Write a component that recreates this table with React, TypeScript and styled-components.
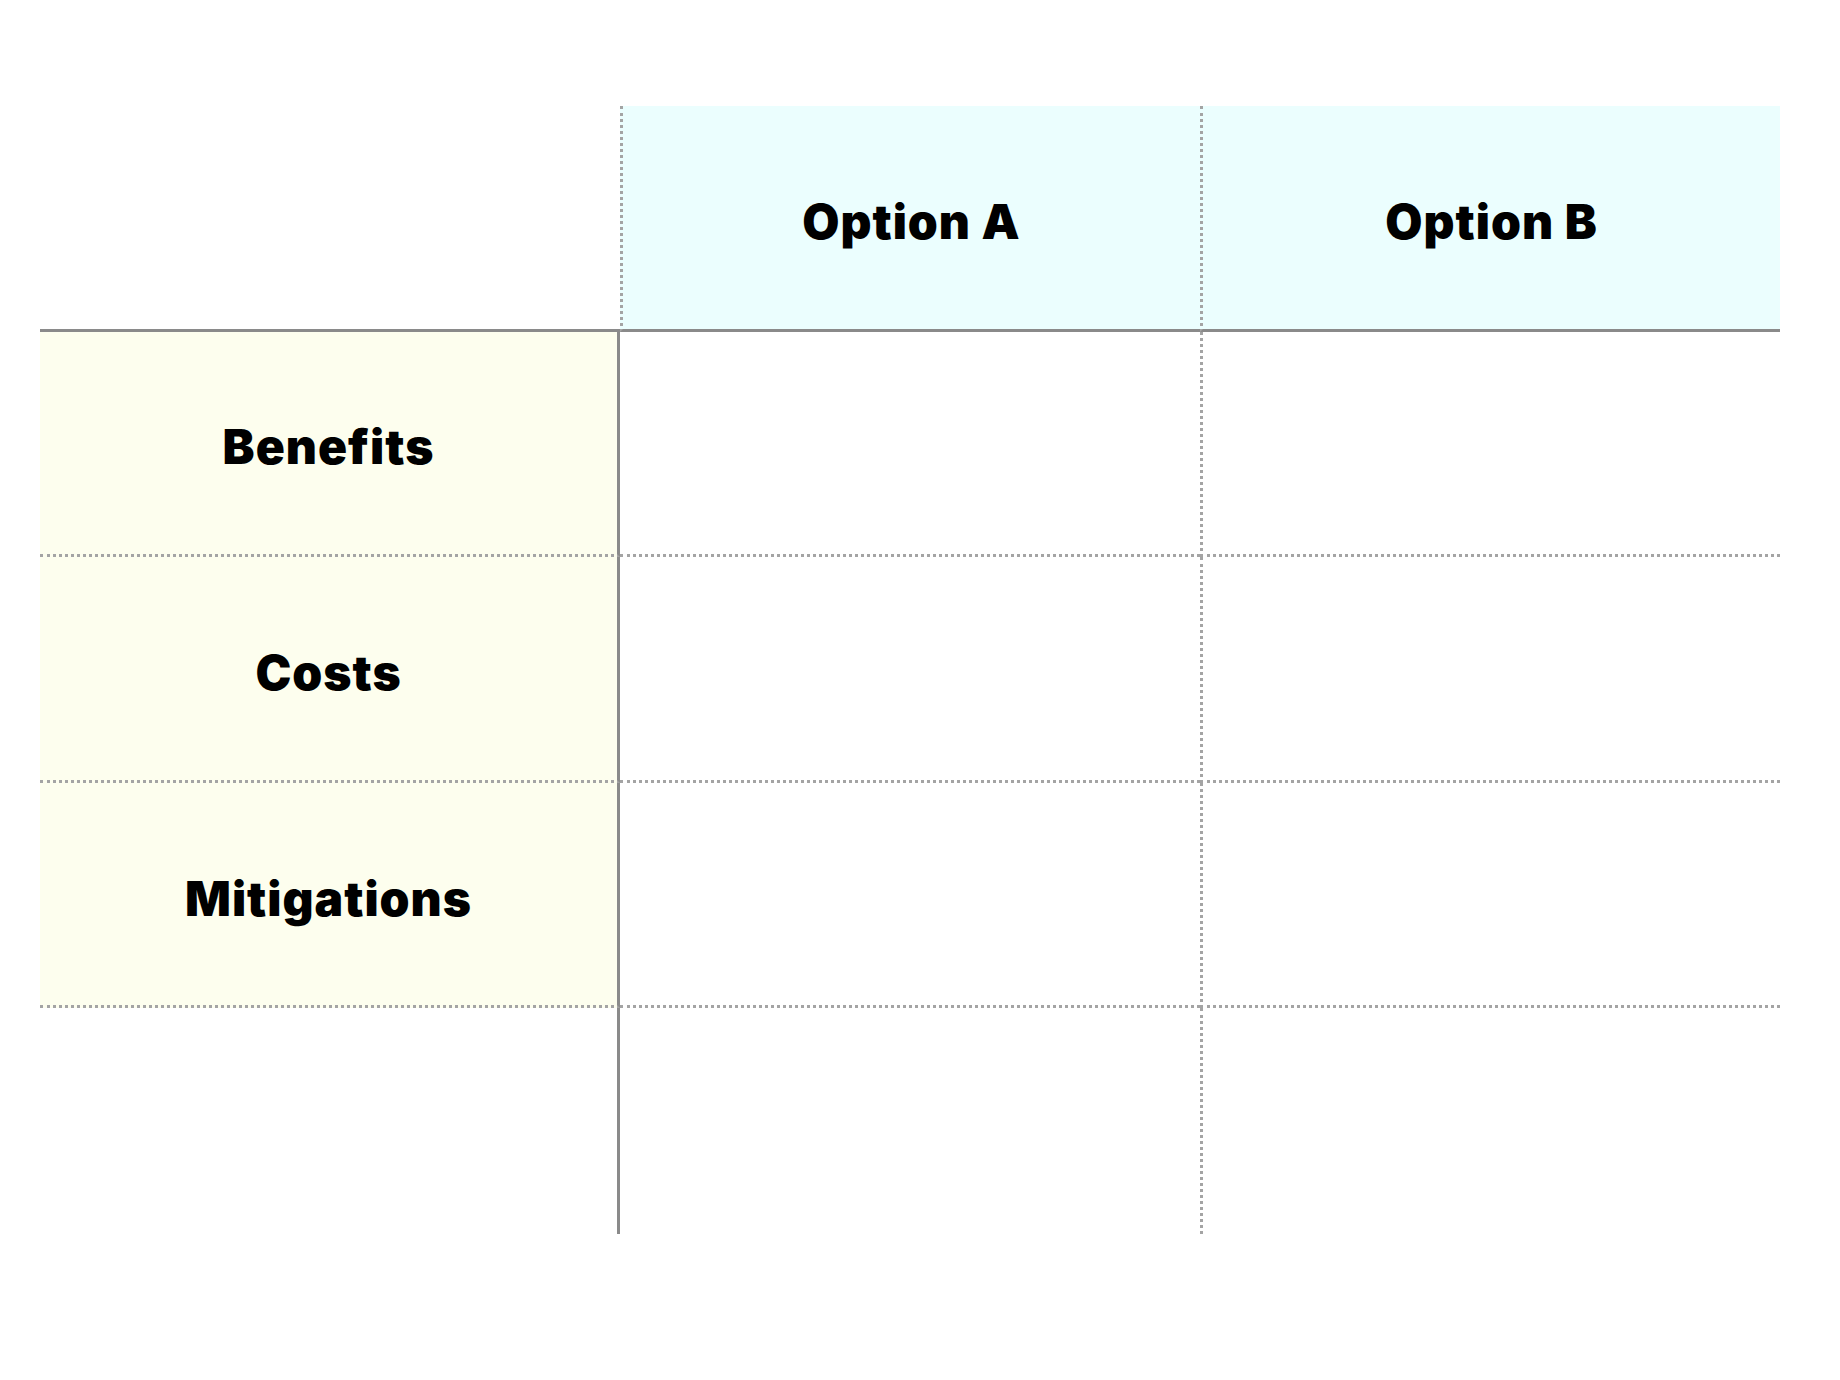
import React from "react";
import styled, { createGlobalStyle } from "styled-components";

const GlobalStyle = createGlobalStyle`
  html, body {
    margin: 0;
    padding: 0;
    background: #ffffff;
  }
  body {
    font-family: "Inter", "Lato", "Liberation Sans", sans-serif;
  }
`;

const Page = styled.div`
  padding: 106px 0 0 40px;
`;

const Grid = styled.div`
  display: grid;
  grid-template-columns: repeat(3, 580px);
  grid-auto-rows: 225.6px;
`;

type CellProps = {
  $bg?: string;
  $left?: "dotted" | "none";
  $right?: "solid" | "none";
  $bottom?: "solid" | "dotted" | "none";
};

const Cell = styled.div<CellProps>`
  box-sizing: border-box;
  display: flex;
  align-items: center;
  justify-content: center;
  padding-top: 8px;
  background: ${(p) => p.$bg ?? "transparent"};
  border-left: ${(p) => (p.$left === "dotted" ? "3px dotted #a4a4a4" : "none")};
  border-right: ${(p) => (p.$right === "solid" ? "3px solid #8a8a8a" : "none")};
  border-bottom: ${(p) =>
    p.$bottom === "solid"
      ? "3px solid #8a8a8a"
      : p.$bottom === "dotted"
      ? "3px dotted #a4a4a4"
      : "none"};
  font-size: 48px;
  font-weight: 900;
  color: #000;
  letter-spacing: 1px;
`;

const CYAN = "#ebfefe";
const IVORY = "#fdfeee";

const rows = ["Benefits", "Costs", "Mitigations", ""];

export default function App() {
  return (
    <>
      <GlobalStyle />
      <Page>
        <Grid>
          <Cell $bottom="solid" />
          <Cell $bg={CYAN} $left="dotted" $bottom="solid">
            Option A
          </Cell>
          <Cell $bg={CYAN} $left="dotted" $bottom="solid">
            Option B
          </Cell>
          {rows.map((label, i) => {
            const last = i === rows.length - 1;
            const bottom = last ? "none" : "dotted";
            return (
              <React.Fragment key={i}>
                <Cell $bg={label ? IVORY : "transparent"} $right="solid" $bottom={bottom}>
                  {label}
                </Cell>
                <Cell $bottom={bottom} />
                <Cell $left="dotted" $bottom={bottom} />
              </React.Fragment>
            );
          })}
        </Grid>
      </Page>
    </>
  );
}
